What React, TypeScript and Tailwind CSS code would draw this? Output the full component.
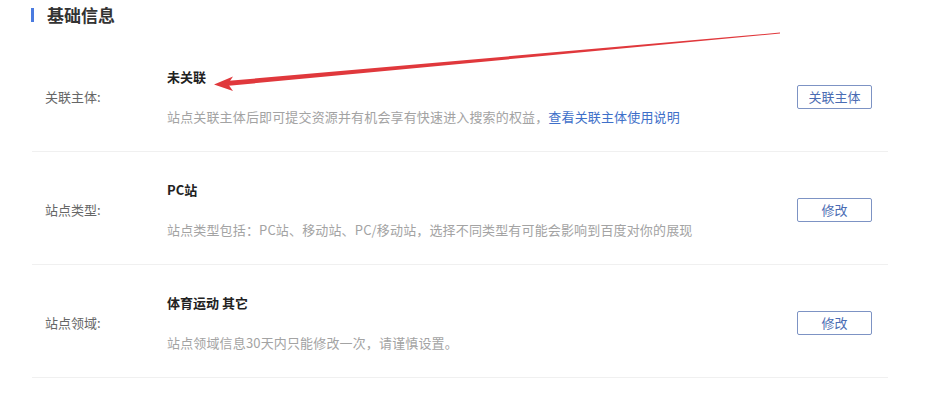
import React from "react";

type Row = {
	label: string;
	value: string;
	desc: string;
	link?: string;
	action: string;
};

const rows: Row[] = [
	{ label: "关联主体:", value: "未关联", desc: "站点关联主体后即可提交资源并有机会享有快速进入搜索的权益，", link: "查看关联主体使用说明", action: "关联主体" },
	{ label: "站点类型:", value: "PC站", desc: "站点类型包括：PC站、移动站、PC/移动站，选择不同类型有可能会影响到百度对你的展现", action: "修改" },
	{ label: "站点领域:", value: "体育运动 其它", desc: "站点领域信息30天内只能修改一次，请谨慎设置。", action: "修改" },
];

function InfoRow({ row }: { row: Row }) {
	return (
		<div className="flex h-[113px] items-center border-b border-[#f0f0f0] pt-[3px]">
			<div className="w-[135px] shrink-0 pl-[13px] text-[13px] text-[#666]">{row.label}</div>
			<div className="flex-1">
				<p className="text-[13px] font-bold leading-[20px] text-[#222]">{row.value}</p>
				<p className="mt-[20px] text-[13px] leading-[20px] tracking-[0.15px] text-[#a3a3a3]">
					{row.desc}
					{row.link && <span className="text-[#3e6fc9]">{row.link}</span>}
				</p>
			</div>
			<button type="button" className="mr-[16px] h-[24px] w-[75px] shrink-0 rounded-[2px] border border-[#7d93c4] bg-white text-[13px] text-[#4a6cb3]">
				{row.action}
			</button>
		</div>
	);
}

export default function App() {
	return (
		<div className="relative h-[400px] w-[952px] overflow-hidden bg-white" style={{ fontFamily: '"Noto Sans CJK SC", "Noto Sans", sans-serif' }}>
			<div className="flex h-[30px] items-center pl-[31px]">
				<span className="h-[14px] w-[3px] bg-[#4a7be0]" />
				<h2 className="ml-[13px] text-[17px] font-bold text-[#333]">基础信息</h2>
			</div>
			<div className="ml-[32px] mt-[9px] w-[856px]">
				{rows.map((row) => (
					<InfoRow key={row.label} row={row} />
				))}
			</div>
			{/* red annotation arrow */}
			<svg className="pointer-events-none absolute left-0 top-0" width="952" height="400">
				<polygon points="226,81 780,32.6 780,33.6 226,86" fill="#e0383c" />
				<polygon points="214,84.5 233,76.5 228,84 233,91" fill="#e0383c" />
			</svg>
		</div>
	);
}
